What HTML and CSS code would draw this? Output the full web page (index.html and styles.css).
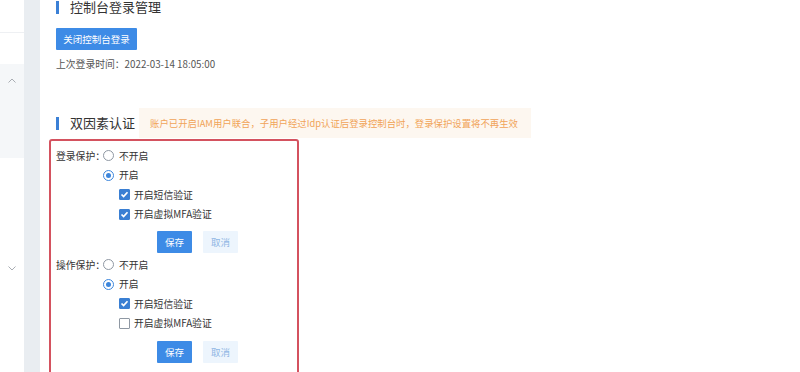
FILE: index.html
```html
<!DOCTYPE html>
<html lang="zh-CN">
<head>
<meta charset="utf-8">
<title>控制台登录管理</title>
<link rel="stylesheet" href="styles.css">
</head>
<body>
<div class="app">
  <aside class="sidebar">
    <div class="side-top"></div>
    <div class="side-gap"></div>
    <div class="side-group">
      <svg class="chev" width="8" height="5" viewBox="0 0 8 5"><path d="M0.5 4.5 L4 1 L7.5 4.5" fill="none" stroke="#a9adb3" stroke-width="1"/></svg>
    </div>
    <div class="side-rest">
      <svg class="chev" width="8" height="5" viewBox="0 0 8 5"><path d="M0.5 0.5 L4 4 L7.5 0.5" fill="none" stroke="#a9adb3" stroke-width="1"/></svg>
    </div>
  </aside>
  <div class="gutter"></div>
  <main class="main">
    <section class="sec">
      <div class="sec-head">
        <span class="bar"></span>
        <h2 class="sec-title">控制台登录管理</h2>
      </div>
      <button class="btn btn-primary btn-wide">关闭控制台登录</button>
      <p class="last-login">上次登录时间：2022-03-14 18:05:00</p>
    </section>

    <section class="sec sec-mfa">
      <div class="sec-head head-mfa">
        <span class="bar"></span>
        <h2 class="sec-title">双因素认证</h2>
        <div class="notice">账户已开启IAM用户联合，子用户经过Idp认证后登录控制台时，登录保护设置将不再生效</div>
      </div>

      <div class="mfa-box">
        <div class="group">
          <div class="row">
            <span class="label">登录保护：</span>
            <span class="radio"></span><span class="opt">不开启</span>
          </div>
          <div class="row indent1">
            <span class="radio on"></span><span class="opt">开启</span>
          </div>
          <div class="row indent2">
            <span class="check on"><svg width="9" height="9" viewBox="0 0 9 9"><path d="M1.5 4.5 L3.6 6.6 L7.5 2.3" fill="none" stroke="#fff" stroke-width="1.7"/></svg></span><span class="opt">开启短信验证</span>
          </div>
          <div class="row indent2">
            <span class="check on"><svg width="9" height="9" viewBox="0 0 9 9"><path d="M1.5 4.5 L3.6 6.6 L7.5 2.3" fill="none" stroke="#fff" stroke-width="1.7"/></svg></span><span class="opt">开启虚拟MFA验证</span>
          </div>
          <div class="actions">
            <button class="btn btn-primary btn-sm">保存</button>
            <button class="btn btn-light btn-sm">取消</button>
          </div>
        </div>

        <div class="group">
          <div class="row">
            <span class="label">操作保护：</span>
            <span class="radio"></span><span class="opt">不开启</span>
          </div>
          <div class="row indent1">
            <span class="radio on"></span><span class="opt">开启</span>
          </div>
          <div class="row indent2">
            <span class="check on"><svg width="9" height="9" viewBox="0 0 9 9"><path d="M1.5 4.5 L3.6 6.6 L7.5 2.3" fill="none" stroke="#fff" stroke-width="1.7"/></svg></span><span class="opt">开启短信验证</span>
          </div>
          <div class="row indent2">
            <span class="check"></span><span class="opt">开启虚拟MFA验证</span>
          </div>
          <div class="actions actions-last">
            <button class="btn btn-primary btn-sm">保存</button>
            <button class="btn btn-light btn-sm">取消</button>
          </div>
        </div>
      </div>
    </section>
  </main>
</div>
</body>
</html>
```

FILE: styles.css
```css
* { box-sizing: border-box; }
html, body { margin: 0; padding: 0; }
body {
  width: 800px;
  height: 372px;
  overflow: hidden;
  background: #fff;
  font-family: "Noto Sans CJK SC", "Noto Sans", sans-serif;
  color: #333;
}
.app {
  display: flex;
  height: 372px;
}

/* sidebar */
.sidebar {
  width: 24px;
  flex: none;
  display: flex;
  flex-direction: column;
  background: #fff;
}
.side-top {
  height: 33px;
  border-bottom: 1px solid #eef0f3;
}
.side-gap { height: 31px; }
.side-group {
  height: 94px;
  background: #f5f7f9;
  display: flex;
  justify-content: center;
  padding-top: 14px;
}
.side-rest {
  flex: 1;
  display: flex;
  justify-content: center;
  padding-top: 108px;
}
.chev { display: block; }

.gutter {
  width: 16px;
  flex: none;
  background: #e9edf1;
}

/* main */
.main {
  flex: 1;
  padding-left: 16px;
  background: #fff;
}
.sec-head {
  display: flex;
  align-items: center;
  height: 14px;
}
.bar {
  width: 3px;
  height: 13px;
  background: #3b80d6;
  margin-right: 11px;
  flex: none;
}
.sec-title {
  margin: 0;
  font-size: 13px;
  line-height: 14px;
  font-weight: 400;
  color: #333;
  white-space: nowrap;
}

.btn {
  font-family: inherit;
  border: none;
  border-radius: 1px;
  padding: 0;
  cursor: pointer;
}
.btn-primary {
  background: #3d8be6;
  color: #fff;
}
.btn-wide {
  display: block;
  margin-top: 14px;
  width: 81px;
  height: 22px;
  font-size: 9.5px;
}
.last-login {
  margin: 7px 0 0;
  font-size: 9.8px;
  line-height: 14px;
  color: #555;
}

/* mfa section */
.sec-mfa { margin-top: 37px; }
.head-mfa {
  height: 30px;
}
.notice {
  margin-left: 4px;
  height: 30px;
  width: 392px;
  padding-left: 11px;
  background: #fdf7f0;
  color: #f1a458;
  font-size: 9.4px;
  line-height: 30px;
  white-space: nowrap;
}

.mfa-box {
  margin-top: 1px;
  margin-left: -7px;
  width: 250px;
  height: 240px;
  border: 2px solid #d4525f;
  border-radius: 3px;
  padding: 5px 0 0 5px;
}
.row {
  display: flex;
  align-items: center;
  height: 19.5px;
  font-size: 9.8px;
  color: #333;
}
.label {
  width: 47px;
  flex: none;
  white-space: nowrap;
}
.indent1 { padding-left: 47px; }
.indent2 { padding-left: 63px; }
.radio {
  width: 11px;
  height: 11px;
  border: 1px solid #8f98a3;
  border-radius: 50%;
  margin-right: 5px;
  flex: none;
  display: flex;
  align-items: center;
  justify-content: center;
  background: #fff;
}
.radio.on { border-color: #3d86dc; }
.radio.on::after {
  content: "";
  width: 5px;
  height: 5px;
  border-radius: 50%;
  background: #3d86dc;
}
.check {
  width: 11px;
  height: 11px;
  border: 1px solid #8f98a3;
  border-radius: 1px;
  margin-right: 4px;
  flex: none;
  display: flex;
  align-items: center;
  justify-content: center;
  background: #fff;
}
.check.on {
  background: #3a7fd3;
  border-color: #3a7fd3;
}
.check svg { display: block; }
.opt { white-space: nowrap; }

.actions {
  display: flex;
  gap: 11px;
  padding-left: 101px;
  margin-top: 7px;
  margin-bottom: 2px;
}
.actions-last { margin-top: 8px; }
.btn-sm {
  width: 35px;
  height: 22px;
  font-size: 9.5px;
}
.btn-light {
  background: #edf5fd;
  color: #8fb6e4;
}
```
